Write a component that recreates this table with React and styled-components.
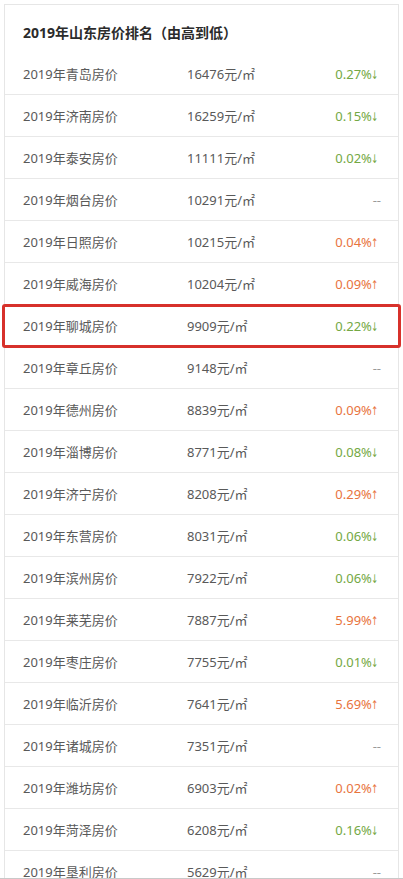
import styled, { createGlobalStyle } from 'styled-components'

const GlobalStyle = createGlobalStyle`
html, body {
  margin: 0;
  padding: 0;
  background: #fff;
}
body {
  font-family: "Noto Sans", "Noto Sans CJK SC", sans-serif;
  -webkit-font-smoothing: antialiased;
}`

const Page = styled.div`
width: 403px;
height: 879px;
overflow: hidden;
padding: 4px 4px 0 4px;
box-sizing: border-box;
position: relative;
border-bottom: 1px solid #c9c9c9;`

const Card = styled.div`
border: 1px solid #e6e6e6;
border-bottom: none;
background: #fff;`

const Title = styled.div`
height: 48px;
box-sizing: border-box;
padding: 6px 18px 0;
display: flex;
align-items: center;
font-size: 14px;
font-weight: 700;
color: #2b2b2b;`

const Row = styled.div`
position: relative;
height: 41px;
display: grid;
grid-template-columns: 164px 1fr auto;
align-items: center;
padding: 0 17px 0 18px;
border-bottom: 1px solid #e8e8e8;
font-size: 13px;
color: #595959;

${p => p.$highlight && `
  &::after {
    content: '';
    position: absolute;
    left: -3px;
    right: -3px;
    top: -1px;
    bottom: -2px;
    border: 3px solid #d7312b;
    border-radius: 3px;
    pointer-events: none;
  }
`}`

const Change = styled.span`
text-align: right;
color: ${p => (p.$dir === 'down' ? '#74a844' : p.$dir === 'up' ? '#e8743d' : '#9a9a9a')};`

const Arrow = styled.span`
display: inline-block;
margin-left: -1px;
font-size: 12px;
font-family: "DejaVu Sans", sans-serif;
transform: scaleX(0.7);
transform-origin: left center;`

const rows = [
  ['青岛', '16476', '0.27%', 'down'],
  ['济南', '16259', '0.15%', 'down'],
  ['泰安', '11111', '0.02%', 'down'],
  ['烟台', '10291', '', ''],
  ['日照', '10215', '0.04%', 'up'],
  ['威海', '10204', '0.09%', 'up'],
  ['聊城', '9909', '0.22%', 'down'],
  ['章丘', '9148', '', ''],
  ['德州', '8839', '0.09%', 'up'],
  ['淄博', '8771', '0.08%', 'down'],
  ['济宁', '8208', '0.29%', 'up'],
  ['东营', '8031', '0.06%', 'down'],
  ['滨州', '7922', '0.06%', 'down'],
  ['莱芜', '7887', '5.99%', 'up'],
  ['枣庄', '7755', '0.01%', 'down'],
  ['临沂', '7641', '5.69%', 'up'],
  ['诸城', '7351', '', ''],
  ['潍坊', '6903', '0.02%', 'up'],
  ['菏泽', '6208', '0.16%', 'down'],
  ['垦利', '5629', '', ''],
]

export default function App() {
  return (
    <Page>
      <GlobalStyle />
      <Card>
        <Title>2019年山东房价排名（由高到低）</Title>
        {rows.map(([city, price, pct, dir]) => (
          <Row key={city} $highlight={city === '聊城'}>
            <span>2019年{city}房价</span>
            <span>{price}元/㎡</span>
            <Change $dir={dir}>
              {dir ? (
                <>
                  {pct}
                  <Arrow>{dir === 'down' ? '↓' : '↑'}</Arrow>
                </>
              ) : '--'}
            </Change>
          </Row>
        ))}
      </Card>
    </Page>
  )
}
